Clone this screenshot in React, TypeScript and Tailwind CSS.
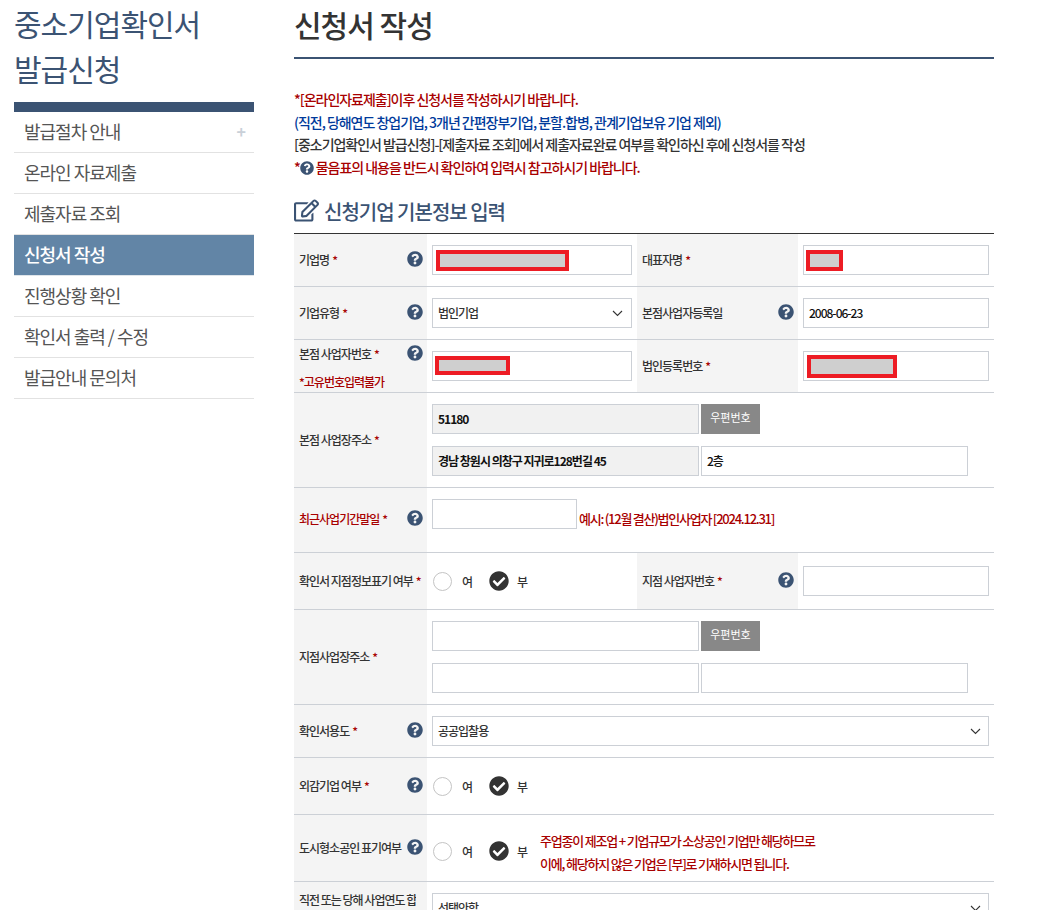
import React from "react";
import { FaQuestionCircle, FaCheckCircle, FaRegEdit } from "react-icons/fa";

const menu = ["발급절차 안내", "온라인 자료제출", "제출자료 조회", "신청서 작성", "진행상황 확인", "확인서 출력 / 수정", "발급안내 문의처"];

function Help({ className = "-mt-[2px]" }: { className?: string }) {
  return <FaQuestionCircle className={`text-[#3b5373] shrink-0 ${className}`} size={16} />;
}

function Star() {
  return <span className="text-[#a80000] ml-[3px]">*</span>;
}

function Box({ className = "pl-[5px]", children }: { className?: string; children?: React.ReactNode }) {
  return (
    <div className={`h-[30px] border border-[#ccd0d6] flex items-center text-[12px] text-[#111] shrink-0 ${className}`}>
      {children}
    </div>
  );
}

function Redact({ className }: { className: string }) {
  return <div className={`${className} border-4 border-[#ed1c24] bg-[#cfcfcf]`} />;
}

function Chevron({ className = "" }: { className?: string }) {
  return (
    <svg className={`ml-auto ${className}`} width="11" height="7" viewBox="0 0 11 7" fill="none">
      <path d="M1 1l4.5 4.5L10 1" stroke="#333" strokeWidth="1.1" />
    </svg>
  );
}

function Radios() {
  return (
    <div className="flex items-center text-[12px] text-[#333] font-medium">
      <span className="w-[19px] h-[19px] rounded-full border border-[#c4c4c4] bg-white ml-[6px]" />
      <span className="ml-[10px] w-[27px] mt-[1px]">여</span>
      <FaCheckCircle size={20} className="text-[#333]" />
      <span className="ml-[8px] mt-[1px]">부</span>
    </div>
  );
}

function Th({ children, className = "items-center" }: { children: React.ReactNode; className?: string }) {
  return (
    <div className={`bg-[#f4f4f4] flex justify-between pl-[5px] pr-[4px] text-[12px] font-medium text-[#333] ${className}`}>
      {children}
    </div>
  );
}

function Row({ h, children }: { h: string; children: React.ReactNode }) {
  return <div className={`grid grid-cols-[133px_210px_161px_196px] border-b border-[#ccd0d6] ${h}`}>{children}</div>;
}

function Button() {
  return (
    <div className="w-[59px] h-[30px] pb-[3px] bg-[#888888] text-white text-[11px] flex items-center justify-center tracking-normal">우편번호</div>
  );
}

export default function App() {
  return (
    <div className="h-[910px] overflow-hidden bg-white flex pl-[14px] font-['Noto_Sans_CJK_KR','Noto_Sans',sans-serif] tracking-[-1px]">
      <aside className="w-[240px] shrink-0">
        <div className="pt-[1px] text-[30px] leading-[45px] text-[#3b5373] h-[102px]">
          중소기업확인서
          <br />
          발급신청
        </div>
        <div className="h-[10px] bg-[#3b5373]" />
        <ul>
          {menu.map((m, i) => (
            <li
              key={m}
              className={`h-[41px] flex items-center pl-[10px] pr-[9px] pb-[2px] text-[18px] border-b ${
                i === 3 ? "bg-[#6285a6] text-white font-medium border-[#dfe5ea]" : "text-[#555] border-[#e2e2e2]"
              }`}
            >
              <span>{m}</span>
              {i === 0 && <span className="ml-auto text-[#c9d0d8] text-[16px] font-bold">+</span>}
            </li>
          ))}
        </ul>
      </aside>

      <main className="w-[700px] ml-[40px] shrink-0">
        <h1 className="h-[59px] border-b-2 border-[#3b5373] text-[30px] leading-[48px] font-medium text-[#333]">신청서 작성</h1>

        <div className="mt-[29px] h-[92px] text-[14px] leading-[22.7px] font-medium tracking-[-1.03px]">
          <p className="text-[#a80000]">*[온라인자료제출]이후 신청서를 작성하시기 바랍니다.</p>
          <p className="text-[#003a9b]">(직전, 당해연도 창업기업, 3개년 간편장부기업, 분할.합병, 관계기업보유 기업 제외)</p>
          <p className="text-[#333]">[중소기업확인서 발급신청]-[제출자료 조회]에서 제출자료완료 여부를 확인하신 후에 신청서를 작성</p>
          <p className="text-[#a80000] flex items-center">
            *
            <FaQuestionCircle size={14} className="text-[#3b5373] ml-[0px] mr-[2px] mt-[2px]" />
            물음표의 내용을 반드시 확인하여 입력시 참고하시기 바랍니다.
          </p>
        </div>

        <div className="mt-[21px] h-[33px] border-b border-[#333] flex items-start">
          <FaRegEdit size={25} className="text-[#3b5373] -mt-[3px]" />
          <span className="ml-[5px] -mt-[1px] text-[20px] leading-[24px] font-medium text-[#3b5373]">신청기업 기본정보 입력</span>
        </div>

        <div>
          <Row h="h-[53px]">
            <Th>
              <span>기업명<Star /></span>
              <Help />
            </Th>
            <div className="flex items-center pl-[5px]">
              <Box className="w-[200px] pl-[3px]"><Redact className="w-[133px] h-[21px]" /></Box>
            </div>
            <Th><span>대표자명<Star /></span></Th>
            <div className="flex items-center pl-[5px]">
              <Box className="w-[186px] pl-[2px]"><Redact className="w-[37px] h-[21px]" /></Box>
            </div>
          </Row>

          <Row h="h-[53px]">
            <Th>
              <span>기업유형<Star /></span>
              <Help />
            </Th>
            <div className="flex items-center pl-[5px]">
              <Box className="w-[200px] pl-[5px] pr-[8px] text-[#333] font-medium">법인기업<Chevron /></Box>
            </div>
            <Th>
              <span>본점사업자등록일</span>
              <Help />
            </Th>
            <div className="flex items-center pl-[5px]">
              <Box className="w-[186px] pl-[5px] font-medium">2008-06-23</Box>
            </div>
          </Row>

          <Row h="h-[53px]">
            <Th className="items-start">
              <div className="leading-[16px] pt-[6px]">
                <div>본점 사업자번호<Star /></div>
                <div className="mt-[12px] text-[#a80000]">*고유번호입력불가</div>
              </div>
              <div className="pt-[5px]"><Help className="" /></div>
            </Th>
            <div className="flex items-center pl-[5px]">
              <Box className="w-[200px] pl-[2px] items-start pt-[4px]"><Redact className="w-[75px] h-[19px]" /></Box>
            </div>
            <Th><span>법인등록번호<Star /></span></Th>
            <div className="flex items-center pl-[5px]">
              <Box className="w-[186px] pl-[3px]"><Redact className="w-[90px] h-[23px]" /></Box>
            </div>
          </Row>

          <Row h="h-[95px]">
            <Th><span>본점 사업장주소<Star /></span></Th>
            <div className="col-span-3 pl-[5px] pt-[11px] flex flex-col gap-[12px]">
              <div className="flex gap-[2px]">
                <Box className="w-[267px] pl-[5px] bg-[#f1f1f1] font-semibold">51180</Box>
                <Button />
              </div>
              <div className="flex gap-[2px]">
                <Box className="w-[267px] pl-[5px] bg-[#f1f1f1] font-semibold">경남 창원시 의창구 지귀로128번길 45</Box>
                <Box className="w-[267px] pl-[5px] font-medium">2층</Box>
              </div>
            </div>
          </Row>

          <Row h="h-[65px]">
            <Th className="items-start pt-[23px]">
              <span className="text-[#a80000] leading-[16px]">최근사업기간말일<span className="ml-[3px]">*</span></span>
              <Help className="-mt-[1px]" />
            </Th>
            <div className="col-span-3 pl-[5px] pt-[11px] flex items-start">
              <Box className="w-[145px]" />
              <span className="ml-[2px] mt-[12px] text-[13px] leading-[16px] font-medium tracking-[-1.25px] text-[#a80000]">예시: (12월 결산)법인사업자 [2024.12.31]</span>
            </div>
          </Row>

          <Row h="h-[57px]">
            <Th><span className="whitespace-nowrap">확인서 지점정보표기 여부<Star /></span></Th>
            <div className="flex items-center"><Radios /></div>
            <Th>
              <span>지점 사업자번호<Star /></span>
              <Help />
            </Th>
            <div className="flex items-center pl-[5px]">
              <Box className="w-[186px]" />
            </div>
          </Row>

          <Row h="h-[95px]">
            <Th><span>지점사업장주소<Star /></span></Th>
            <div className="col-span-3 pl-[5px] pt-[11px] flex flex-col gap-[12px]">
              <div className="flex gap-[2px]">
                <Box className="w-[267px]" />
                <Button />
              </div>
              <div className="flex gap-[2px]">
                <Box className="w-[267px]" />
                <Box className="w-[267px]" />
              </div>
            </div>
          </Row>

          <Row h="h-[53px]">
            <Th>
              <span>확인서용도<Star /></span>
              <Help />
            </Th>
            <div className="col-span-3 flex items-center pl-[5px]">
              <Box className="w-[557px] pl-[5px] pr-[7px] text-[#333] font-medium">공공입찰용<Chevron /></Box>
            </div>
          </Row>

          <Row h="h-[57px]">
            <Th>
              <span>외감기업 여부<Star /></span>
              <Help />
            </Th>
            <div className="col-span-3 flex items-center"><Radios /></div>
          </Row>

          <Row h="h-[67px]">
            <Th>
              <span className="whitespace-nowrap">도시형소공인 표기여부</span>
              <Help />
            </Th>
            <div className="col-span-3 flex items-start">
              <div className="pt-[26px]"><Radios /></div>
              <div className="ml-[13px] pt-[14px] text-[13px] leading-[23px] font-medium tracking-[-1.2px] text-[#a80000]">
                <p>주업종이 제조업 + 기업규모가 소상공인 기업만 해당하므로</p>
                <p>이에, 해당하지 않은 기업은 [부]로 기재하시면 됩니다.</p>
              </div>
            </div>
          </Row>

          <Row h="h-[60px]">
            <Th className="items-start pt-[10px]">
              <span className="leading-[16px] whitespace-nowrap overflow-hidden">직전 또는 당해 사업연도 합</span>
            </Th>
            <div className="col-span-3 pl-[5px] pt-[11px]">
              <Box className="w-[557px] pl-[5px] pr-[7px] text-[#333] font-medium">선택안함<Chevron /></Box>
            </div>
          </Row>
        </div>
      </main>
    </div>
  );
}
